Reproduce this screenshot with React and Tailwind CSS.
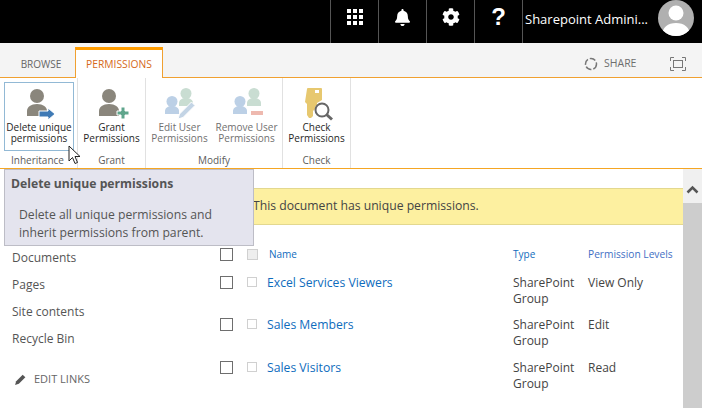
import { FaBell, FaCog } from 'react-icons/fa'

const font = { fontFamily: '"Open Sans", "Noto Sans", sans-serif' }

// big grey person used by Delete / Grant
const Person = () => (
  <g transform="translate(4 3)" fill="#8a867c">
    <circle cx="10" cy="7" r="7" />
    <path d="M0 27v-5c0-4 4-7 10-7s10 3 10 7v5z" />
  </g>
)

// small faded person used by Edit / Remove
const SmallPerson = ({ x, y, fill }) => (
  <g transform={`translate(${x} ${y})`} fill={fill}>
    <circle cx="7" cy="5.500" r="5.500" />
    <path d="M0 18v-3c0-3 3-5 7-5s7 2 7 5v3z" />
  </g>
)

const DeleteIcon = () => (
  <svg width="32" height="35" viewBox="0 0 32 35">
    <Person />
    <path d="M16 25h9v-3l7 6-7 6v-3h-9z" fill="#3f7ab5" stroke="#fff" strokeWidth="1" />
  </svg>
)

const GrantIcon = () => (
  <svg width="34" height="35" viewBox="0 0 34 35">
    <Person />
    <path d="M26 21h4v4h4v4h-4v4h-4v-4h-4v-4h4z" fill="#5fa58c" stroke="#fff" strokeWidth="1" />
  </svg>
)

const EditIcon = () => (
  <svg width="32" height="35" viewBox="0 0 32 35">
    <SmallPerson x={15} y={2} fill="#c9ddd2" />
    <SmallPerson x={1} y={10} fill="#bcd0e6" />
    <path d="M14 33l1.500-5 12-12 3.500 3.500-12 12z" fill="#c3d4e5" stroke="#fff" strokeWidth="1" />
  </svg>
)

const RemoveIcon = () => (
  <svg width="32" height="35" viewBox="0 0 32 35">
    <SmallPerson x={16} y={2} fill="#c9ddd2" />
    <SmallPerson x={2} y={10} fill="#bcd0e6" />
    <rect x="20" y="25" width="12" height="4" fill="#eeb9af" />
  </svg>
)

const CheckIcon = () => (
  <svg width="34" height="35" viewBox="0 0 34 35">
    <path d="M7 3a1 1 0 0 1 1-1h13a1 1 0 0 1 1 1v11l-5 3v2l-2 2v2l-2 2v5l-2 2h-2l-2-3v-11l-2-2z" fill="#e7c86f" />
    <rect x="15" y="4" width="4" height="3" fill="#fff" />
    <circle cx="22" cy="24" r="6.500" fill="#fff" fillOpacity="0.8" stroke="#666" strokeWidth="2" />
    <path d="M26.500 28.500l5.500 5" stroke="#666" strokeWidth="3" />
  </svg>
)

const RibbonButton = ({ icon, lines, muted, boxed, width }) => (
  <div
    className={`${width} h-[69px] flex flex-col items-center pt-[3px] text-[10px] leading-[11px] border ${
      boxed ? 'border-[#92b9d5]' : 'border-transparent'
    } ${muted ? 'text-[#707070]' : 'text-[#262626]'}`}
  >
    <div className="h-[36px] flex items-start justify-center">{icon}</div>
    <span className="whitespace-nowrap">{lines[0]}</span>
    <span className="whitespace-nowrap">{lines[1]}</span>
  </div>
)

const RibbonGroup = ({ label, width, labelClass = '', children }) => (
  <div className={`${width} h-[90px] flex flex-col border-r border-[#e1e1e1]`}>
    <div className="flex justify-center pt-[4px] gap-px">{children}</div>
    <div className={`mt-[2px] text-center text-[10px] leading-[14px] text-[#5c5c5c] ${labelClass}`}>{label}</div>
  </div>
)

const TopCell = ({ children }) => (
  <div className="w-[48px] h-full pb-[9px] border-l border-[#555] flex items-center justify-center text-white">{children}</div>
)

const NavItem = ({ children }) => (
  <div className="h-[27px] flex items-center text-[12px] text-[#555]">{children}</div>
)

const Row = ({ name, level, h }) => (
  <div className={`flex ${h}`}>
    <div className="w-[27px] pt-[1px]">
      <div className="w-[13px] h-[13px] border border-[#6e6e6e]" />
    </div>
    <div className="w-[20px] pt-[1px]">
      <div className="w-[10px] h-[10px] mt-[1px] border border-[#d0d0d0]" />
    </div>
    <div className="w-[246px] text-[12.2px] leading-[16px] text-[#0f6cbd]">{name}</div>
    <div className="w-[75px] text-[12px] leading-[16px] text-[#444]">
      SharePoint
      <br />
      Group
    </div>
    <div className="text-[12px] leading-[16px] text-[#444]">{level}</div>
  </div>
)

export default function App() {
  return (
    <div className="relative w-[702px] h-[408px] overflow-hidden bg-white flex flex-col" style={font}>
      {/* Suite bar */}
      <div className="h-[43px] bg-black flex justify-end items-center shrink-0">
        <TopCell>
          <div className="grid grid-cols-3 gap-[2px]">
            {[0, 1, 2, 3, 4, 5, 6, 7, 8].map((i) => (
              <div key={i} className="w-[4px] h-[4px] bg-white" />
            ))}
          </div>
        </TopCell>
        <TopCell><FaBell size={17} /></TopCell>
        <TopCell><FaCog size={18} /></TopCell>
        <TopCell><span className="text-[24px] leading-none font-bold" style={{ fontFamily: '"Liberation Sans", sans-serif' }}>?</span></TopCell>
        <div className="h-full w-[180px] border-l border-[#555] flex pl-[2px] text-white text-[13px] justify-between">
          <span className="whitespace-nowrap pt-[10px]">Sharepoint Admini...</span>
          <div className="w-[36px] h-[36px] mr-[8px] rounded-full bg-[#b0b0b0] overflow-hidden shrink-0">
            <svg viewBox="0 0 36 36" width="36" height="36">
              <circle cx="18" cy="13" r="7.500" fill="#fff" />
              <path d="M4 36c0-9 6-13 14-13s14 4 14 13z" fill="#fff" />
            </svg>
          </div>
        </div>
      </div>

      {/* Tabs */}
      <div className="h-[35px] bg-[#f4f4f4] border-b border-[#f0a030] flex items-end shrink-0 relative">
        <div className="w-[75px] h-[30px] pl-[7px] pt-[5px] flex items-center justify-center text-[10px] text-[#666]">BROWSE</div>
        <div className="w-[88px] h-[31px] -mb-px pt-[2px] bg-white border-x border-[#f0a030] border-t-[3px] border-t-[#ff9c00] flex items-center justify-center text-[10.300px] text-[#d66a1b]">
          PERMISSIONS
        </div>
        <div className="ml-auto h-[30px] pt-[3px] flex items-center text-[10.500px] text-[#6e6e6e]">
          <svg width="14" height="14" viewBox="0 0 14 14" className="mr-[6px]">
            <circle cx="7" cy="7" r="5.500" fill="none" stroke="#777" strokeWidth="1.500" strokeDasharray="6 2" />
          </svg>
          <span className="w-[66px]">SHARE</span>
          <svg width="16" height="14" viewBox="0 0 16 14" className="mr-[16px]">
            <path d="M.5 4V.5H4M12 .5h3.500V4M15.500 10v3.500H12M4 13.500H.5V10" fill="none" stroke="#777" />
            <rect x="3.500" y="3.500" width="9" height="7" fill="none" stroke="#777" />
          </svg>
        </div>
      </div>

      {/* Ribbon */}
      <div className="h-[91px] bg-white border-b border-[#f5a623] flex shrink-0 pl-[3px]">
        <RibbonGroup label="Inheritance" width="w-[75px]" labelClass="pr-[5px]">
          <RibbonButton boxed width="w-[70px] mr-[2px]" icon={<DeleteIcon />} lines={['Delete unique', 'permissions']} />
        </RibbonGroup>
        <RibbonGroup label="Grant" width="w-[68px]">
          <RibbonButton width="w-[62px]" icon={<GrantIcon />} lines={['Grant', 'Permissions']} />
        </RibbonGroup>
        <RibbonGroup label="Modify" width="w-[137px]">
          <RibbonButton muted width="w-[64px]" icon={<EditIcon />} lines={['Edit User', 'Permissions']} />
          <RibbonButton muted width="w-[68px]" icon={<RemoveIcon />} lines={['Remove User', 'Permissions']} />
        </RibbonGroup>
        <RibbonGroup label="Check" width="w-[68px]">
          <RibbonButton width="w-[62px]" icon={<CheckIcon />} lines={['Check', 'Permissions']} />
        </RibbonGroup>
      </div>

      {/* Body */}
      <div className="flex-1 flex min-h-0">
        <div className="w-[220px] shrink-0 pl-[12px] pt-[75px]">
          <NavItem>Documents</NavItem>
          <NavItem>Pages</NavItem>
          <NavItem>Site contents</NavItem>
          <NavItem>Recycle Bin</NavItem>
          <div className="mt-[19px] flex items-center text-[11px] text-[#666]">
            <svg width="13" height="13" viewBox="0 0 12 12" className="ml-[2px] mr-[7px]">
              <path d="M1 11l1-3.500 6-6 2.500 2.500-6 6z" fill="#555" />
            </svg>
            EDIT LINKS
          </div>
        </div>
        <div className="flex-1 min-w-0">
          <div className="mt-[19px] h-[37px] -ml-[10px] pl-[43px] bg-[#fdf0a0] border-y border-[#e3d88f] flex items-center text-[12.200px] text-[#444]">
            This document has unique permissions.
          </div>
          <div className="flex h-[22px] mt-[21px] text-[10px] leading-[16px] text-[#0f6cbd]">
            <div className="w-[27px] pt-[2px]">
              <div className="w-[13px] h-[13px] border border-[#6e6e6e]" />
            </div>
            <div className="w-[22px] pt-[3px]">
              <div className="w-[11px] h-[11px] border border-[#d0d0d0] bg-[#eeeeee]" />
            </div>
            <div className="w-[244px]">Name</div>
            <div className="w-[75px]">Type</div>
            <div className="text-[#3f6fc4] text-[10.200px] whitespace-nowrap">Permission Levels</div>
          </div>
          <div className="mt-[7px]">
            <Row name="Excel Services Viewers" level="View Only" h="h-[42px]" />
            <Row name="Sales Members" level="Edit" h="h-[43px]" />
            <Row name="Sales Visitors" level="Read" h="h-[40px]" />
          </div>
        </div>
        <div className="w-[19px] shrink-0 bg-[#cdcdcd] flex flex-col">
          <div className="h-[34px] pt-[6px] bg-[#f0f0f0] flex items-center justify-center">
            <svg width="13" height="9" viewBox="0 0 13 9">
              <path d="M1.500 7.500l5-5 5 5" fill="none" stroke="#555" strokeWidth="2.500" />
            </svg>
          </div>
        </div>
      </div>

      {/* Tooltip */}
      <div className="absolute left-[4px] top-[169px] w-[250px] h-[77px] bg-[#e4e4ee] border border-[#bdbdc6] text-[#555]">
        <div className="pl-[6px] pt-[6px] text-[12.200px] leading-[16px] font-bold">Delete unique permissions</div>
        <div className="pl-[14px] pt-[14px] text-[12.200px] leading-[18px]">
          Delete all unique permissions and
          <br />
          inherit permissions from parent.
        </div>
      </div>

      {/* Mouse cursor */}
      <svg className="absolute left-[68px] top-[145px]" width="13" height="20" viewBox="0 0 13 20">
        <path d="M1 1v15l3.500-3.500 2.500 6 2.500-1-2.500-6h5z" fill="#fff" stroke="#222" strokeWidth="1" />
      </svg>
    </div>
  )
}
